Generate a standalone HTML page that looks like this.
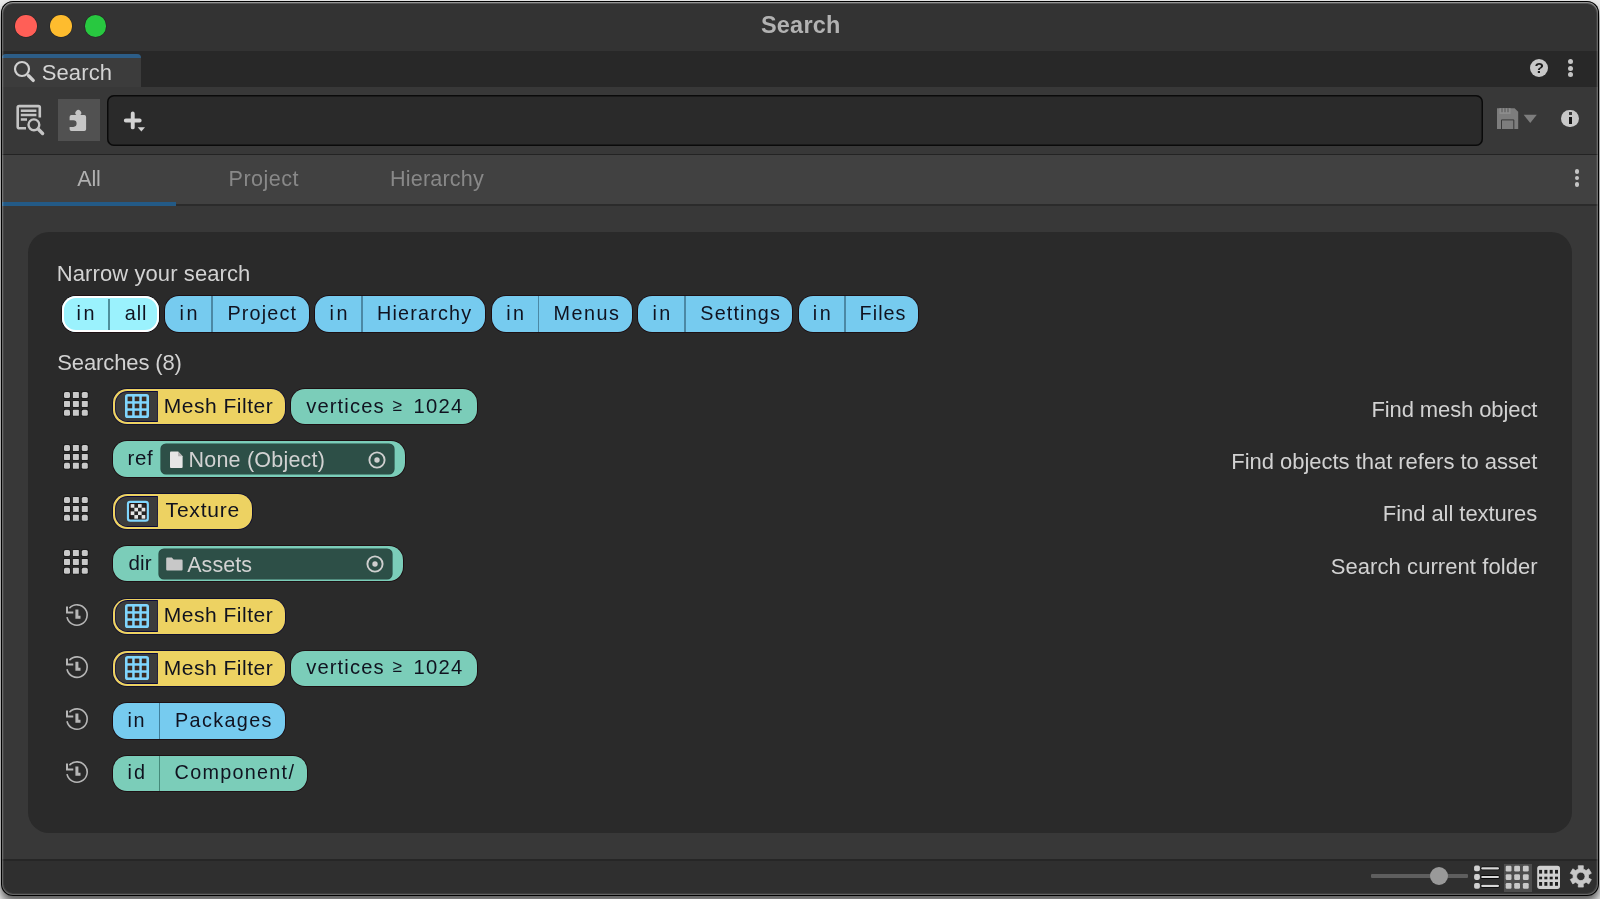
<!DOCTYPE html>
<html><head><meta charset="utf-8"><title>Search</title>
<style>
html,body{margin:0;padding:0;width:1600px;height:899px;overflow:hidden}
body{background:#ececec;font-family:"Liberation Sans",sans-serif;position:relative}
#win{position:absolute;left:1px;top:1px;width:1598px;height:895px;border-radius:12px;background:#383838;overflow:hidden;box-shadow:0 6px 8px rgba(0,0,0,.62)}
#win div,#win svg,#win .t{position:absolute}
.t{white-space:pre;font-family:"Liberation Sans",sans-serif}
#rim{left:0;top:0;width:1598px;height:895px;border-radius:12px;box-shadow:inset 0 0 0 1px #000,inset 0 1px 0 1px rgba(255,255,255,.22),inset 0 2px 0 1px rgba(255,255,255,.1),inset 0 0 0 2px rgba(255,255,255,.2),inset 0 0 0 3px rgba(255,255,255,.07);pointer-events:none}
</style></head><body>
<div id="win">
<div id="ofs" style="left:-1px;top:-1px;width:1600px;height:899px;will-change:transform">
<!-- bands -->
<div style="left:0;top:0;width:1600px;height:51px;background:#333333"></div>
<div style="left:0;top:51px;width:1600px;height:36px;background:#282828"></div>
<div style="left:2px;top:54px;width:139px;height:33px;background:#3c3c3c;border-radius:4px 4px 0 0"></div>
<div style="left:2px;top:54px;width:139px;height:4px;background:#2c5d87;border-radius:4px 4px 0 0"></div>
<div style="left:0;top:87px;width:1600px;height:67px;background:#383838"></div>
<div style="left:0;top:154px;width:1600px;height:1px;background:#232323"></div>
<div style="left:0;top:155px;width:1600px;height:49px;background:#414141"></div>
<div style="left:0;top:203.5px;width:1600px;height:2.5px;background:#2b2b2b"></div>
<div style="left:2px;top:202px;width:174px;height:4px;background:#235a86"></div>
<!-- search field -->
<div style="left:107px;top:94.5px;width:1376px;height:51.5px;background:#2a2a2a;border-radius:7px;box-shadow:inset 0 0 0 1.5px #0a0a0a"></div>
<div style="left:58px;top:99px;width:41.5px;height:42px;background:#515151"></div>
<!-- panel -->
<div style="left:28px;top:232px;width:1544px;height:600.5px;background:#2a2a2a;border-radius:21px"></div>
<!-- bottom bar -->
<div style="left:0;top:859px;width:1600px;height:1.5px;background:#262626"></div>
<div style="left:0;top:860.5px;width:1600px;height:40px;background:#2f2f2f"></div>
<div style="left:15.1px;top:15.1px;width:21.6px;height:21.6px;border-radius:50%;background:#ff5f57;box-shadow:0 0 0 .6px rgba(0,0,0,.25)"></div>
<div style="left:50.0px;top:15.1px;width:21.6px;height:21.6px;border-radius:50%;background:#febc2e;box-shadow:0 0 0 .6px rgba(0,0,0,.25)"></div>
<div style="left:84.9px;top:15.1px;width:21.6px;height:21.6px;border-radius:50%;background:#28c840;box-shadow:0 0 0 .6px rgba(0,0,0,.25)"></div>
<svg style="left:12px;top:58px" width="26" height="26" viewBox="12 58 26 26" fill="none" stroke="#d0d0d0"><circle cx="22" cy="69" r="7" stroke-width="2.2"/><path d="M28.6 75.8 L33.2 80.4" stroke-width="3.4" stroke-linecap="round"/></svg>
<svg style="left:14px;top:102px" width="34" height="36" viewBox="14 102 34 36" fill="none" stroke="#c4c4c4"><path d="M39.8 117.6 V107.6 Q39.8 106.1 38.3 106.1 H19.2 Q17.7 106.1 17.7 107.6 V126.7 Q17.7 128.2 19.2 128.2 H26" stroke-width="2.6"/><path d="M20.8 110.75 H36.4 M20.8 114.9 H36.4 M20.8 119.5 H27" stroke-width="2.5"/><circle cx="33.9" cy="124.8" r="5.4" stroke-width="2.4"/><path d="M38.4 129.3 L42.6 133.5" stroke-width="3.4" stroke-linecap="round"/></svg>
<svg style="left:66px;top:106px" width="24" height="28" viewBox="66 106 24 28"><path fill="#c6c6c6" d="M71.4 115.1 H76.4 A2.9 2.9 0 1 1 80.2 115.1 H84.3 Q86.1 115.1 86.1 116.9 V129.2 Q86.1 131 84.3 131 H71.4 Q69.6 131 69.6 129.2 V126.9 H73.3 A3.3 3.3 0 0 0 73.3 120.3 H69.6 V116.9 Q69.6 115.1 71.4 115.1 Z"/></svg>
<svg style="left:120px;top:108px" width="30" height="28" viewBox="120 108 30 28"><path d="M125.8 120.45 H139.7 M132.75 113.5 V127.4" stroke="#d2d2d2" stroke-width="3.9" stroke-linecap="round" fill="none"/><path d="M137.7 127.2 H145 L141.35 131.6 Z" fill="#d2d2d2"/></svg>
<div style="left:1530px;top:58.9px;width:18.2px;height:18.2px;border-radius:50%;background:#c8c8c8"></div>
<span class="t" style="left:1534.6px;top:60.3px;font-size:15.5px;line-height:16px;font-weight:700;color:#1c1c1c">?</span>
<div style="left:1567.7px;top:58.9px;width:5.2px;height:5.2px;border-radius:50%;background:#c4c4c4"></div>
<div style="left:1567.7px;top:65.5px;width:5.2px;height:5.2px;border-radius:50%;background:#c4c4c4"></div>
<div style="left:1567.7px;top:72.2px;width:5.2px;height:5.2px;border-radius:50%;background:#c4c4c4"></div>
<div style="left:1574.6px;top:169.0px;width:4.8px;height:4.8px;border-radius:50%;background:#c4c4c4"></div>
<div style="left:1574.6px;top:175.6px;width:4.8px;height:4.8px;border-radius:50%;background:#c4c4c4"></div>
<div style="left:1574.6px;top:182.1px;width:4.8px;height:4.8px;border-radius:50%;background:#c4c4c4"></div>
<svg style="left:1496px;top:107px" width="42" height="24" viewBox="1496 107 42 24"><path fill="#7d7d7d" d="M1497 108.2 H1514.6 L1518.2 111.8 V129 H1497 Z"/><rect x="1499.4" y="108.2" width="11.2" height="5.8" fill="#8c8c8c"/><rect x="1501.2" y="108.2" width="1.6" height="4" fill="#6a6a6a"/><rect x="1504.2" y="108.2" width="1.6" height="4" fill="#6a6a6a"/><rect x="1507.2" y="108.2" width="1.6" height="4" fill="#6a6a6a"/><path d="M1501.5 129 V119.9 H1513.8 V129" fill="none" stroke="#383838" stroke-width="1"/><path fill="#7d7d7d" d="M1523.7 114.8 H1536.8 L1530.25 123 Z"/></svg>
<div style="left:1561.3px;top:109.7px;width:17.8px;height:17.8px;border-radius:50%;background:#c8c8c8"></div>
<div style="left:1568.8px;top:112px;width:2.8px;height:2.8px;background:#3a3a3a"></div>
<div style="left:1568.6px;top:117.2px;width:3.2px;height:6.6px;background:#161616"></div>
<div style="left:1371.2px;top:874.4px;width:96.4px;height:3.4px;background:#5e5e5e;border-radius:1px"></div>
<div style="left:1429.7px;top:867px;width:18px;height:18px;border-radius:50%;background:#999"></div>
<svg style="left:1472px;top:863px" width="30" height="28" viewBox="1472 863 30 28"><rect x="1474.1" y="865.5" width="5.8" height="5.8" rx="1.8" fill="#d0d0d0"/><rect x="1480.6" y="866.5" width="19" height="3.8" rx="1.9" fill="#0a0a0a"/><rect x="1481.2" y="867.3" width="17.8" height="2.2" rx="1.1" fill="#d8d8d8"/><rect x="1474.1" y="874.1" width="5.8" height="5.8" rx="1.8" fill="#d0d0d0"/><rect x="1480.6" y="875.1" width="19" height="3.8" rx="1.9" fill="#0a0a0a"/><rect x="1481.2" y="875.9" width="17.8" height="2.2" rx="1.1" fill="#d8d8d8"/><rect x="1474.1" y="883.0" width="5.8" height="5.8" rx="1.8" fill="#d0d0d0"/><rect x="1480.6" y="884.0" width="19" height="3.8" rx="1.9" fill="#0a0a0a"/><rect x="1481.2" y="884.8" width="17.8" height="2.2" rx="1.1" fill="#d8d8d8"/></svg>
<div style="left:1504.1px;top:864.1px;width:27.7px;height:27.8px;background:#4d4d4d"></div>
<svg style="left:1504px;top:864px" width="28" height="28" viewBox="1504 864 28 28"><rect x="1505.7" y="865.8" width="5.8" height="5.7" rx="1.2" fill="#c8c8c8"/><rect x="1505.7" y="874.3" width="5.8" height="5.7" rx="1.2" fill="#c8c8c8"/><rect x="1505.7" y="883" width="5.8" height="5.7" rx="1.2" fill="#c8c8c8"/><rect x="1514.2" y="865.8" width="5.8" height="5.7" rx="1.2" fill="#c8c8c8"/><rect x="1514.2" y="874.3" width="5.8" height="5.7" rx="1.2" fill="#c8c8c8"/><rect x="1514.2" y="883" width="5.8" height="5.7" rx="1.2" fill="#c8c8c8"/><rect x="1522.9" y="865.8" width="5.8" height="5.7" rx="1.2" fill="#c8c8c8"/><rect x="1522.9" y="874.3" width="5.8" height="5.7" rx="1.2" fill="#c8c8c8"/><rect x="1522.9" y="883" width="5.8" height="5.7" rx="1.2" fill="#c8c8c8"/></svg>
<svg style="left:1536px;top:864px" width="26" height="27" viewBox="1536 864 26 27"><rect x="1537.2" y="865.8" width="22.8" height="23.1" rx="2.6" fill="#d0d0d0"/><rect x="1539.1" y="869.9" width="3" height="3.7" fill="#1e1e1e"/><rect x="1539.1" y="876.7" width="3" height="2.6" fill="#1e1e1e"/><rect x="1539.1" y="882" width="3" height="3.8" fill="#1e1e1e"/><rect x="1544.35" y="869.9" width="3" height="3.7" fill="#1e1e1e"/><rect x="1544.35" y="876.7" width="3" height="2.6" fill="#1e1e1e"/><rect x="1544.35" y="882" width="3" height="3.8" fill="#1e1e1e"/><rect x="1549.7" y="869.9" width="3" height="3.7" fill="#1e1e1e"/><rect x="1549.7" y="876.7" width="3" height="2.6" fill="#1e1e1e"/><rect x="1549.7" y="882" width="3" height="3.8" fill="#1e1e1e"/><rect x="1555" y="869.9" width="3" height="3.7" fill="#1e1e1e"/><rect x="1555" y="876.7" width="3" height="2.6" fill="#1e1e1e"/><rect x="1555" y="882" width="3" height="3.8" fill="#1e1e1e"/></svg>
<svg style="left:1568px;top:864px" width="26" height="26" viewBox="1568 864 26 26"><path d="M1578.39 868.88 L1578.24 865.70 L1583.36 865.70 L1583.21 868.88 L1586.11 870.55 L1588.78 868.83 L1591.35 873.27 L1588.52 874.73 L1588.52 878.07 L1591.35 879.53 L1588.78 883.97 L1586.11 882.25 L1583.21 883.92 L1583.36 887.10 L1578.24 887.10 L1578.39 883.92 L1575.49 882.25 L1572.82 883.97 L1570.25 879.53 L1573.08 878.07 L1573.08 874.73 L1570.25 873.27 L1572.82 868.83 L1575.49 870.55 Z M1585.00 876.4 A4.2 4.2 0 1 0 1576.60 876.4 A4.2 4.2 0 1 0 1585.00 876.4 Z" fill="#c8c8c8" fill-rule="evenodd" stroke="#c8c8c8" stroke-width="0.7" stroke-linejoin="round"/></svg>
<div style="left:62.4px;top:296.2px;width:97.0px;height:35.8px;background:#9bf2fd;border-radius:14px;box-shadow:inset 0 0 0 2px #fff,0 0 0 0.8px rgba(24,4,8,.85);"></div>
<div style="left:108.1px;top:298.6px;width:1.8px;height:31px;background:#4e909c"></div>
<div style="left:165.3px;top:296.2px;width:144.1px;height:36.1px;background:#76cbef;border-radius:14px;box-shadow:0 0 0 0.8px rgba(24,4,8,.85);"></div>
<div style="left:211.0px;top:296.2px;width:1.8px;height:36.1px;background:#4b88a4"></div>
<div style="left:315.3px;top:296.2px;width:170.2px;height:36.1px;background:#76cbef;border-radius:14px;box-shadow:0 0 0 0.8px rgba(24,4,8,.85);"></div>
<div style="left:361.1px;top:296.2px;width:1.8px;height:36.1px;background:#4b88a4"></div>
<div style="left:491.9px;top:296.2px;width:140.6px;height:36.1px;background:#76cbef;border-radius:14px;box-shadow:0 0 0 0.8px rgba(24,4,8,.85);"></div>
<div style="left:537.6px;top:296.2px;width:1.8px;height:36.1px;background:#4b88a4"></div>
<div style="left:638.4px;top:296.2px;width:154.1px;height:36.1px;background:#76cbef;border-radius:14px;box-shadow:0 0 0 0.8px rgba(24,4,8,.85);"></div>
<div style="left:683.8px;top:296.2px;width:1.8px;height:36.1px;background:#4b88a4"></div>
<div style="left:798.8px;top:296.2px;width:119.6px;height:36.1px;background:#76cbef;border-radius:14px;box-shadow:0 0 0 0.8px rgba(24,4,8,.85);"></div>
<div style="left:844.1px;top:296.2px;width:1.8px;height:36.1px;background:#4b88a4"></div>
<svg style="left:63px;top:391.4px" width="26" height="26" viewBox="-1 -1 26 26"><rect x="-0.8" y="-0.8" width="7.6" height="7.6" rx="1.4" fill="#0c0c0c" opacity=".55"/><rect x="-0.8" y="8.1" width="7.6" height="7.6" rx="1.4" fill="#0c0c0c" opacity=".55"/><rect x="-0.8" y="17.0" width="7.6" height="7.6" rx="1.4" fill="#0c0c0c" opacity=".55"/><rect x="8.1" y="-0.8" width="7.6" height="7.6" rx="1.4" fill="#0c0c0c" opacity=".55"/><rect x="8.1" y="8.1" width="7.6" height="7.6" rx="1.4" fill="#0c0c0c" opacity=".55"/><rect x="8.1" y="17.0" width="7.6" height="7.6" rx="1.4" fill="#0c0c0c" opacity=".55"/><rect x="17.0" y="-0.8" width="7.6" height="7.6" rx="1.4" fill="#0c0c0c" opacity=".55"/><rect x="17.0" y="8.1" width="7.6" height="7.6" rx="1.4" fill="#0c0c0c" opacity=".55"/><rect x="17.0" y="17.0" width="7.6" height="7.6" rx="1.4" fill="#0c0c0c" opacity=".55"/><rect x="0.0" y="0.0" width="6" height="6" rx="1.6" fill="#c9c9c9"/><rect x="0.0" y="8.9" width="6" height="6" rx="0.6" fill="#c9c9c9"/><rect x="0.0" y="17.8" width="6" height="6" rx="1.6" fill="#c9c9c9"/><rect x="8.9" y="0.0" width="6" height="6" rx="0.6" fill="#c9c9c9"/><rect x="8.9" y="8.9" width="6" height="6" rx="0.6" fill="#c9c9c9"/><rect x="8.9" y="17.8" width="6" height="6" rx="0.6" fill="#c9c9c9"/><rect x="17.8" y="0.0" width="6" height="6" rx="1.6" fill="#c9c9c9"/><rect x="17.8" y="8.9" width="6" height="6" rx="0.6" fill="#c9c9c9"/><rect x="17.8" y="17.8" width="6" height="6" rx="1.6" fill="#c9c9c9"/></svg>
<div style="left:112.7px;top:389.0px;width:172.5px;height:35.4px;background:#edd262;border-radius:14px;box-shadow:0 0 0 0.8px rgba(8,8,50,.9);"></div>
<div style="left:115.9px;top:391.9px;width:40.9px;height:29.6px;background:#3c3c3c;border-radius:11.5px 0 0 11.5px;box-shadow:0 0 0 0.9px #0a0a3c;"></div>
<svg style="left:125px;top:394.4px" width="24" height="24" viewBox="0 0 24 24"><rect x="0" y="0" width="24" height="24" rx="2.6" fill="#7fd6fe"/><rect x="2.6" y="2.6" width="4.6" height="4.6" fill="#3a2a22"/><rect x="2.6" y="9.7" width="4.6" height="4.6" fill="#3a2a22"/><rect x="2.6" y="16.8" width="4.6" height="4.6" fill="#3a2a22"/><rect x="9.7" y="2.6" width="4.6" height="4.6" fill="#3a2a22"/><rect x="9.7" y="9.7" width="4.6" height="4.6" fill="#3a2a22"/><rect x="9.7" y="16.8" width="4.6" height="4.6" fill="#3a2a22"/><rect x="16.8" y="2.6" width="4.6" height="4.6" fill="#3a2a22"/><rect x="16.8" y="9.7" width="4.6" height="4.6" fill="#3a2a22"/><rect x="16.8" y="16.8" width="4.6" height="4.6" fill="#3a2a22"/></svg>
<div style="left:290.8px;top:389.0px;width:186.4px;height:35.4px;background:#7bcdb9;border-radius:14px;box-shadow:0 0 0 0.8px rgba(24,4,8,.85);"></div>
<svg style="left:63px;top:443.8px" width="26" height="26" viewBox="-1 -1 26 26"><rect x="-0.8" y="-0.8" width="7.6" height="7.6" rx="1.4" fill="#0c0c0c" opacity=".55"/><rect x="-0.8" y="8.1" width="7.6" height="7.6" rx="1.4" fill="#0c0c0c" opacity=".55"/><rect x="-0.8" y="17.0" width="7.6" height="7.6" rx="1.4" fill="#0c0c0c" opacity=".55"/><rect x="8.1" y="-0.8" width="7.6" height="7.6" rx="1.4" fill="#0c0c0c" opacity=".55"/><rect x="8.1" y="8.1" width="7.6" height="7.6" rx="1.4" fill="#0c0c0c" opacity=".55"/><rect x="8.1" y="17.0" width="7.6" height="7.6" rx="1.4" fill="#0c0c0c" opacity=".55"/><rect x="17.0" y="-0.8" width="7.6" height="7.6" rx="1.4" fill="#0c0c0c" opacity=".55"/><rect x="17.0" y="8.1" width="7.6" height="7.6" rx="1.4" fill="#0c0c0c" opacity=".55"/><rect x="17.0" y="17.0" width="7.6" height="7.6" rx="1.4" fill="#0c0c0c" opacity=".55"/><rect x="0.0" y="0.0" width="6" height="6" rx="1.6" fill="#c9c9c9"/><rect x="0.0" y="8.9" width="6" height="6" rx="0.6" fill="#c9c9c9"/><rect x="0.0" y="17.8" width="6" height="6" rx="1.6" fill="#c9c9c9"/><rect x="8.9" y="0.0" width="6" height="6" rx="0.6" fill="#c9c9c9"/><rect x="8.9" y="8.9" width="6" height="6" rx="0.6" fill="#c9c9c9"/><rect x="8.9" y="17.8" width="6" height="6" rx="0.6" fill="#c9c9c9"/><rect x="17.8" y="0.0" width="6" height="6" rx="1.6" fill="#c9c9c9"/><rect x="17.8" y="8.9" width="6" height="6" rx="0.6" fill="#c9c9c9"/><rect x="17.8" y="17.8" width="6" height="6" rx="1.6" fill="#c9c9c9"/></svg>
<div style="left:112.9px;top:441.4px;width:292.4px;height:35.4px;background:#7bcdb9;border-radius:14px;box-shadow:0 0 0 0.8px rgba(24,4,8,.85);"></div>
<div style="left:160.6px;top:444.3px;width:233.4px;height:29.9px;background:#2d4f47;border-radius:5px;box-shadow:0 0 0 0.6px #264a42;"></div>
<svg style="left:169.6px;top:450.5px" width="13.2" height="17.6" viewBox="0 0 14 18"><path d="M1 0.3 H8.6 L13.4 5.2 V16.6 Q13.4 17.6 12.4 17.6 H1 Q0 17.6 0 16.6 V1.3 Q0 0.3 1 0.3 Z" fill="#e6e6e6"/><path d="M8.6 0.3 V5.2 H13.4 Z" fill="#b4b4b4"/></svg>
<svg style="left:366.8px;top:449.6px" width="20" height="20" viewBox="0 0 20 20"><circle cx="10" cy="10" r="7.6" fill="none" stroke="#cfcfcf" stroke-width="1.9"/><circle cx="10" cy="10" r="2.7" fill="#cfcfcf"/></svg>
<svg style="left:63px;top:496.1px" width="26" height="26" viewBox="-1 -1 26 26"><rect x="-0.8" y="-0.8" width="7.6" height="7.6" rx="1.4" fill="#0c0c0c" opacity=".55"/><rect x="-0.8" y="8.1" width="7.6" height="7.6" rx="1.4" fill="#0c0c0c" opacity=".55"/><rect x="-0.8" y="17.0" width="7.6" height="7.6" rx="1.4" fill="#0c0c0c" opacity=".55"/><rect x="8.1" y="-0.8" width="7.6" height="7.6" rx="1.4" fill="#0c0c0c" opacity=".55"/><rect x="8.1" y="8.1" width="7.6" height="7.6" rx="1.4" fill="#0c0c0c" opacity=".55"/><rect x="8.1" y="17.0" width="7.6" height="7.6" rx="1.4" fill="#0c0c0c" opacity=".55"/><rect x="17.0" y="-0.8" width="7.6" height="7.6" rx="1.4" fill="#0c0c0c" opacity=".55"/><rect x="17.0" y="8.1" width="7.6" height="7.6" rx="1.4" fill="#0c0c0c" opacity=".55"/><rect x="17.0" y="17.0" width="7.6" height="7.6" rx="1.4" fill="#0c0c0c" opacity=".55"/><rect x="0.0" y="0.0" width="6" height="6" rx="1.6" fill="#c9c9c9"/><rect x="0.0" y="8.9" width="6" height="6" rx="0.6" fill="#c9c9c9"/><rect x="0.0" y="17.8" width="6" height="6" rx="1.6" fill="#c9c9c9"/><rect x="8.9" y="0.0" width="6" height="6" rx="0.6" fill="#c9c9c9"/><rect x="8.9" y="8.9" width="6" height="6" rx="0.6" fill="#c9c9c9"/><rect x="8.9" y="17.8" width="6" height="6" rx="0.6" fill="#c9c9c9"/><rect x="17.8" y="0.0" width="6" height="6" rx="1.6" fill="#c9c9c9"/><rect x="17.8" y="8.9" width="6" height="6" rx="0.6" fill="#c9c9c9"/><rect x="17.8" y="17.8" width="6" height="6" rx="1.6" fill="#c9c9c9"/></svg>
<div style="left:112.7px;top:493.7px;width:139.2px;height:35.4px;background:#edd262;border-radius:14px;box-shadow:0 0 0 0.8px rgba(8,8,50,.9);"></div>
<div style="left:115.9px;top:496.6px;width:40.9px;height:29.6px;background:#3c3c3c;border-radius:11.5px 0 0 11.5px;box-shadow:0 0 0 0.9px #0a0a3c;"></div>
<svg style="left:126px;top:500.2px" width="24" height="23" viewBox="126 0 24 23"><rect x="128" y="1.9" width="19.8" height="18.8" rx="1.5" fill="#2a1410"/><rect x="128" y="1.9" width="19.8" height="18.8" rx="2.2" fill="none" stroke="#7fd6fe" stroke-width="2.2"/><rect x="130.7" y="4.1" width="14.6" height="14.6" fill="#262626"/><rect x="130.70" y="4.10" width="3.65" height="3.65" fill="#e4e4e4"/><rect x="130.70" y="11.40" width="3.65" height="3.65" fill="#e4e4e4"/><rect x="134.35" y="7.75" width="3.65" height="3.65" fill="#e4e4e4"/><rect x="134.35" y="15.05" width="3.65" height="3.65" fill="#e4e4e4"/><rect x="138.00" y="4.10" width="3.65" height="3.65" fill="#e4e4e4"/><rect x="138.00" y="11.40" width="3.65" height="3.65" fill="#e4e4e4"/><rect x="141.65" y="7.75" width="3.65" height="3.65" fill="#e4e4e4"/><rect x="141.65" y="15.05" width="3.65" height="3.65" fill="#e4e4e4"/></svg>
<svg style="left:63px;top:548.5px" width="26" height="26" viewBox="-1 -1 26 26"><rect x="-0.8" y="-0.8" width="7.6" height="7.6" rx="1.4" fill="#0c0c0c" opacity=".55"/><rect x="-0.8" y="8.1" width="7.6" height="7.6" rx="1.4" fill="#0c0c0c" opacity=".55"/><rect x="-0.8" y="17.0" width="7.6" height="7.6" rx="1.4" fill="#0c0c0c" opacity=".55"/><rect x="8.1" y="-0.8" width="7.6" height="7.6" rx="1.4" fill="#0c0c0c" opacity=".55"/><rect x="8.1" y="8.1" width="7.6" height="7.6" rx="1.4" fill="#0c0c0c" opacity=".55"/><rect x="8.1" y="17.0" width="7.6" height="7.6" rx="1.4" fill="#0c0c0c" opacity=".55"/><rect x="17.0" y="-0.8" width="7.6" height="7.6" rx="1.4" fill="#0c0c0c" opacity=".55"/><rect x="17.0" y="8.1" width="7.6" height="7.6" rx="1.4" fill="#0c0c0c" opacity=".55"/><rect x="17.0" y="17.0" width="7.6" height="7.6" rx="1.4" fill="#0c0c0c" opacity=".55"/><rect x="0.0" y="0.0" width="6" height="6" rx="1.6" fill="#c9c9c9"/><rect x="0.0" y="8.9" width="6" height="6" rx="0.6" fill="#c9c9c9"/><rect x="0.0" y="17.8" width="6" height="6" rx="1.6" fill="#c9c9c9"/><rect x="8.9" y="0.0" width="6" height="6" rx="0.6" fill="#c9c9c9"/><rect x="8.9" y="8.9" width="6" height="6" rx="0.6" fill="#c9c9c9"/><rect x="8.9" y="17.8" width="6" height="6" rx="0.6" fill="#c9c9c9"/><rect x="17.8" y="0.0" width="6" height="6" rx="1.6" fill="#c9c9c9"/><rect x="17.8" y="8.9" width="6" height="6" rx="0.6" fill="#c9c9c9"/><rect x="17.8" y="17.8" width="6" height="6" rx="1.6" fill="#c9c9c9"/></svg>
<div style="left:112.9px;top:546.1px;width:290.1px;height:35.4px;background:#7bcdb9;border-radius:14px;box-shadow:0 0 0 0.8px rgba(24,4,8,.85);"></div>
<div style="left:159.0px;top:549.0px;width:233.2px;height:29.9px;background:#2d4f47;border-radius:5px;box-shadow:0 0 0 0.6px #264a42;"></div>
<svg style="left:166.3px;top:557.3px" width="17" height="14" viewBox="0 0 17 14"><path d="M1.2 0.4 H5.8 L7.6 2.4 H15.6 Q16.6 2.4 16.6 3.4 V12.4 Q16.6 13.4 15.6 13.4 H1.2 Q0.2 13.4 0.2 12.4 V1.4 Q0.2 0.4 1.2 0.4 Z" fill="#c8c8c8"/></svg>
<svg style="left:365.0px;top:554.3px" width="20" height="20" viewBox="0 0 20 20"><circle cx="10" cy="10" r="7.6" fill="none" stroke="#cfcfcf" stroke-width="1.9"/><circle cx="10" cy="10" r="2.7" fill="#cfcfcf"/></svg>
<svg style="left:62px;top:599.5px" width="30" height="30" viewBox="62 599.5 30 30" fill="none" stroke="#b6b6b6" stroke-linecap="butt" stroke-linejoin="miter"><path d="M67.00 616.68 A10.2 10.2 0 1 0 69.40 607.68" stroke-width="1.6"/><path d="M67.00 605.88 V611.88 H73.30" stroke-width="2"/><path d="M76.90 609.08 V616.68 H80.50" stroke-width="3"/></svg>
<div style="left:112.7px;top:598.5px;width:172.8px;height:35.4px;background:#edd262;border-radius:14px;box-shadow:0 0 0 0.8px rgba(8,8,50,.9);"></div>
<div style="left:115.9px;top:601.4px;width:40.9px;height:29.6px;background:#3c3c3c;border-radius:11.5px 0 0 11.5px;box-shadow:0 0 0 0.9px #0a0a3c;"></div>
<svg style="left:125px;top:603.9px" width="24" height="24" viewBox="0 0 24 24"><rect x="0" y="0" width="24" height="24" rx="2.6" fill="#7fd6fe"/><rect x="2.6" y="2.6" width="4.6" height="4.6" fill="#3a2a22"/><rect x="2.6" y="9.7" width="4.6" height="4.6" fill="#3a2a22"/><rect x="2.6" y="16.8" width="4.6" height="4.6" fill="#3a2a22"/><rect x="9.7" y="2.6" width="4.6" height="4.6" fill="#3a2a22"/><rect x="9.7" y="9.7" width="4.6" height="4.6" fill="#3a2a22"/><rect x="9.7" y="16.8" width="4.6" height="4.6" fill="#3a2a22"/><rect x="16.8" y="2.6" width="4.6" height="4.6" fill="#3a2a22"/><rect x="16.8" y="9.7" width="4.6" height="4.6" fill="#3a2a22"/><rect x="16.8" y="16.8" width="4.6" height="4.6" fill="#3a2a22"/></svg>
<svg style="left:62px;top:651.8px" width="30" height="30" viewBox="62 651.8 30 30" fill="none" stroke="#b6b6b6" stroke-linecap="butt" stroke-linejoin="miter"><path d="M67.00 669.05 A10.2 10.2 0 1 0 69.40 660.05" stroke-width="1.6"/><path d="M67.00 658.25 V664.25 H73.30" stroke-width="2"/><path d="M76.90 661.45 V669.05 H80.50" stroke-width="3"/></svg>
<div style="left:112.7px;top:650.8px;width:172.8px;height:35.4px;background:#edd262;border-radius:14px;box-shadow:0 0 0 0.8px rgba(8,8,50,.9);"></div>
<div style="left:115.9px;top:653.7px;width:40.9px;height:29.6px;background:#3c3c3c;border-radius:11.5px 0 0 11.5px;box-shadow:0 0 0 0.9px #0a0a3c;"></div>
<svg style="left:125px;top:656.2px" width="24" height="24" viewBox="0 0 24 24"><rect x="0" y="0" width="24" height="24" rx="2.6" fill="#7fd6fe"/><rect x="2.6" y="2.6" width="4.6" height="4.6" fill="#3a2a22"/><rect x="2.6" y="9.7" width="4.6" height="4.6" fill="#3a2a22"/><rect x="2.6" y="16.8" width="4.6" height="4.6" fill="#3a2a22"/><rect x="9.7" y="2.6" width="4.6" height="4.6" fill="#3a2a22"/><rect x="9.7" y="9.7" width="4.6" height="4.6" fill="#3a2a22"/><rect x="9.7" y="16.8" width="4.6" height="4.6" fill="#3a2a22"/><rect x="16.8" y="2.6" width="4.6" height="4.6" fill="#3a2a22"/><rect x="16.8" y="9.7" width="4.6" height="4.6" fill="#3a2a22"/><rect x="16.8" y="16.8" width="4.6" height="4.6" fill="#3a2a22"/></svg>
<div style="left:290.8px;top:650.8px;width:186.4px;height:35.4px;background:#7bcdb9;border-radius:14px;box-shadow:0 0 0 0.8px rgba(24,4,8,.85);"></div>
<svg style="left:62px;top:704.2px" width="30" height="30" viewBox="62 704.2 30 30" fill="none" stroke="#b6b6b6" stroke-linecap="butt" stroke-linejoin="miter"><path d="M67.00 721.42 A10.2 10.2 0 1 0 69.40 712.42" stroke-width="1.6"/><path d="M67.00 710.62 V716.62 H73.30" stroke-width="2"/><path d="M76.90 713.82 V721.42 H80.50" stroke-width="3"/></svg>
<div style="left:112.8px;top:703.2px;width:172.2px;height:35.4px;background:#76cbef;border-radius:14px;box-shadow:0 0 0 0.8px rgba(24,4,8,.85);"></div>
<div style="left:158.5px;top:703.2px;width:1.8px;height:35.4px;background:#3f7f9c"></div>
<svg style="left:62px;top:756.6px" width="30" height="30" viewBox="62 756.6 30 30" fill="none" stroke="#b6b6b6" stroke-linecap="butt" stroke-linejoin="miter"><path d="M67.00 773.79 A10.2 10.2 0 1 0 69.40 764.79" stroke-width="1.6"/><path d="M67.00 762.99 V768.99 H73.30" stroke-width="2"/><path d="M76.90 766.19 V773.79 H80.50" stroke-width="3"/></svg>
<div style="left:112.8px;top:755.6px;width:194.2px;height:35.4px;background:#7bcdb9;border-radius:14px;box-shadow:0 0 0 0.8px rgba(24,4,8,.85);"></div>
<div style="left:158.5px;top:755.6px;width:1.8px;height:35.4px;background:#458a7a"></div>
<span class="t" style="left:761.00px;top:14.00px;font-size:23.5px;line-height:23.5px;color:#b2b2b2;letter-spacing:0.19px;font-weight:700;">Search</span>
<span class="t" style="left:41.70px;top:61.80px;font-size:22px;line-height:22px;color:#d4d4d4;letter-spacing:0.13px;">Search</span>
<span class="t" style="left:77.20px;top:168.00px;font-size:21.6px;line-height:21.6px;color:#b0b0b0;letter-spacing:-0.20px;">All</span>
<span class="t" style="left:228.60px;top:168.00px;font-size:21.6px;line-height:21.6px;color:#888888;letter-spacing:0.43px;">Project</span>
<span class="t" style="left:390.00px;top:168.00px;font-size:21.6px;line-height:21.6px;color:#888888;letter-spacing:0.18px;">Hierarchy</span>
<span class="t" style="left:56.80px;top:263.00px;font-size:22px;line-height:22px;color:#d2d2d2;letter-spacing:0.09px;">Narrow your search</span>
<span class="t" style="left:57.30px;top:351.50px;font-size:22px;line-height:22px;color:#d2d2d2;letter-spacing:-0.12px;">Searches (8)</span>
<span class="t" style="left:76.50px;top:303.70px;font-size:19.8px;line-height:19.8px;color:#10121f;letter-spacing:2.51px;">in</span>
<span class="t" style="left:124.80px;top:303.70px;font-size:19.8px;line-height:19.8px;color:#10121f;letter-spacing:0.90px;">all</span>
<span class="t" style="left:179.60px;top:303.70px;font-size:19.8px;line-height:19.8px;color:#10121f;letter-spacing:2.51px;">in</span>
<span class="t" style="left:227.40px;top:303.70px;font-size:19.8px;line-height:19.8px;color:#10121f;letter-spacing:1.19px;">Project</span>
<span class="t" style="left:329.60px;top:303.70px;font-size:19.8px;line-height:19.8px;color:#10121f;letter-spacing:2.51px;">in</span>
<span class="t" style="left:377.00px;top:303.70px;font-size:19.8px;line-height:19.8px;color:#10121f;letter-spacing:1.19px;">Hierarchy</span>
<span class="t" style="left:506.20px;top:303.70px;font-size:19.8px;line-height:19.8px;color:#10121f;letter-spacing:2.51px;">in</span>
<span class="t" style="left:553.40px;top:303.70px;font-size:19.8px;line-height:19.8px;color:#10121f;letter-spacing:1.53px;">Menus</span>
<span class="t" style="left:652.40px;top:303.70px;font-size:19.8px;line-height:19.8px;color:#10121f;letter-spacing:2.51px;">in</span>
<span class="t" style="left:700.30px;top:303.70px;font-size:19.8px;line-height:19.8px;color:#10121f;letter-spacing:1.16px;">Settings</span>
<span class="t" style="left:812.75px;top:303.70px;font-size:19.8px;line-height:19.8px;color:#10121f;letter-spacing:2.56px;">in</span>
<span class="t" style="left:859.60px;top:303.70px;font-size:19.8px;line-height:19.8px;color:#10121f;letter-spacing:1.03px;">Files</span>
<span class="t" style="left:163.80px;top:394.70px;font-size:21px;line-height:21px;color:#10121f;letter-spacing:0.50px;">Mesh Filter</span>
<span class="t" style="left:306.25px;top:395.60px;font-size:20.2px;line-height:20.2px;color:#10121f;letter-spacing:1.11px;">vertices</span>
<span class="t" style="left:392.50px;top:396.60px;font-size:17px;line-height:17px;color:#10121f;letter-spacing:0.75px;">≥</span>
<span class="t" style="left:413.40px;top:395.60px;font-size:20.2px;line-height:20.2px;color:#10121f;letter-spacing:1.27px;">1024</span>
<span class="t" style="left:127.40px;top:447.87px;font-size:20.5px;line-height:20.5px;color:#10121f;letter-spacing:0.74px;">ref</span>
<span class="t" style="left:188.50px;top:449.67px;font-size:21.5px;line-height:21.5px;color:#d2d2d2;letter-spacing:0.21px;">None (Object)</span>
<span class="t" style="left:165.60px;top:499.44px;font-size:21px;line-height:21px;color:#10121f;letter-spacing:0.79px;">Texture</span>
<span class="t" style="left:128.40px;top:552.61px;font-size:20.5px;line-height:20.5px;color:#10121f;letter-spacing:0.20px;">dir</span>
<span class="t" style="left:187.20px;top:554.71px;font-size:21.5px;line-height:21.5px;color:#d2d2d2;letter-spacing:0.05px;">Assets</span>
<span class="t" style="left:163.80px;top:604.18px;font-size:21px;line-height:21px;color:#10121f;letter-spacing:0.50px;">Mesh Filter</span>
<span class="t" style="left:163.80px;top:656.55px;font-size:21px;line-height:21px;color:#10121f;letter-spacing:0.50px;">Mesh Filter</span>
<span class="t" style="left:306.25px;top:657.45px;font-size:20.2px;line-height:20.2px;color:#10121f;letter-spacing:1.11px;">vertices</span>
<span class="t" style="left:392.50px;top:658.45px;font-size:17px;line-height:17px;color:#10121f;letter-spacing:0.75px;">≥</span>
<span class="t" style="left:413.40px;top:657.45px;font-size:20.2px;line-height:20.2px;color:#10121f;letter-spacing:1.27px;">1024</span>
<span class="t" style="left:127.50px;top:710.62px;font-size:19.8px;line-height:19.8px;color:#10121f;letter-spacing:1.71px;">in</span>
<span class="t" style="left:175.00px;top:710.62px;font-size:19.8px;line-height:19.8px;color:#10121f;letter-spacing:1.37px;">Packages</span>
<span class="t" style="left:127.50px;top:762.99px;font-size:19.8px;line-height:19.8px;color:#10121f;letter-spacing:2.11px;">id</span>
<span class="t" style="left:174.60px;top:762.99px;font-size:19.8px;line-height:19.8px;color:#10121f;letter-spacing:1.28px;">Component/</span>
<span class="t" style="left:1371.40px;top:398.60px;font-size:22px;line-height:22px;color:#d2d2d2;letter-spacing:-0.10px;">Find mesh object</span>
<span class="t" style="left:1231.30px;top:450.70px;font-size:22px;line-height:22px;color:#d2d2d2;letter-spacing:-0.03px;">Find objects that refers to asset</span>
<span class="t" style="left:1382.75px;top:503.20px;font-size:22px;line-height:22px;color:#d2d2d2;letter-spacing:-0.05px;">Find all textures</span>
<span class="t" style="left:1330.75px;top:555.60px;font-size:22px;line-height:22px;color:#d2d2d2;letter-spacing:0.07px;">Search current folder</span>
</div>
<div id="rim"></div>
</div>
</body></html>
